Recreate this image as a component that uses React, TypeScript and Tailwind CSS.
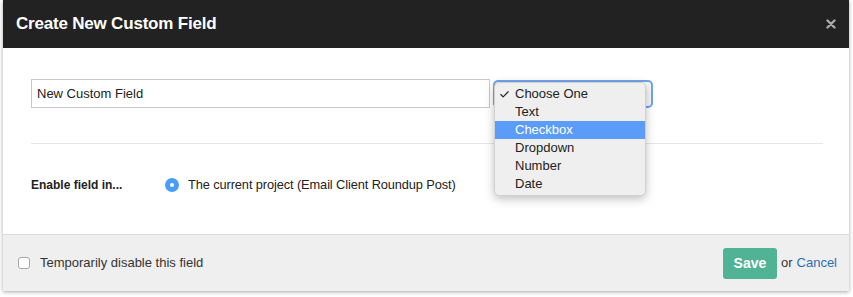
import { Check } from "lucide-react";

const options = ["Choose One", "Text", "Checkbox", "Dropdown", "Number", "Date"];

export default function App() {
  return (
    <div
      className="w-[853px] h-[297px] bg-white pl-[3px] overflow-hidden"
      style={{ fontFamily: '"Liberation Sans", Arial, sans-serif' }}
    >
      <div className="w-[846px] h-[291px] flex flex-col shadow-[0_1px_4px_rgba(0,0,0,0.35)]">
        {/* Header */}
        <div className="h-[48px] bg-[#222222] flex items-center justify-between pl-[13px] pr-[13px]">
          <h1 className="text-white text-[17px] font-bold tracking-[-0.2px]">Create New Custom Field</h1>
          <svg width="10" height="10" viewBox="0 0 10 10">
            <path d="M1.5 1.5 L8.5 8.5 M8.5 1.5 L1.5 8.5" stroke="#a9a9a9" strokeWidth="2.4" strokeLinecap="round" />
          </svg>
        </div>

        {/* Body */}
        <div className="flex-1 bg-white pl-[28px] pr-[26px] pt-[31px]">
          <div className="flex items-center gap-[3px] relative">
            <input
              readOnly
              value="New Custom Field"
              className="w-[459px] h-[29px] border border-[#c8c8c8] px-[5px] text-[13px] text-[#222] outline-none"
            />
            <div className="w-[160px] h-[28px] rounded-[5px] border-2 border-[#6fa4ee] bg-[#f7f7f7] flex items-center justify-end pr-[4px]">
              <svg width="7" height="11" viewBox="0 0 7 11" className="text-[#333]">
                <path d="M0.5 4.5 L3.5 1 L6.5 4.5 Z M0.5 6.5 L3.5 10 L6.5 6.5 Z" fill="currentColor" />
              </svg>
            </div>

            {/* Open dropdown menu */}
            <div className="absolute left-[463px] top-[3px] w-[152px] rounded-[5px] bg-[#efefef] border border-[#d0d0d0] shadow-[0_3px_10px_rgba(0,0,0,0.25)] py-[2px]">
              {options.map((o, i) => (
                <div
                  key={o}
                  className={`h-[18px] flex items-center pl-[20px] relative text-[13px] ${
                    i === 2 ? "bg-[#5a9cf8] text-white" : "text-[#222]"
                  }`}
                >
                  {i === 0 && (
                    <Check className="absolute left-[4px] w-[11px] h-[11px]" strokeWidth={2.5} />
                  )}
                  {o}
                </div>
              ))}
            </div>
          </div>

          <div className="mt-[35px] border-t border-[#e6e6e6]" />

          <div className="flex items-center mt-[31px]">
            <span className="w-[134px] text-[12px] font-bold text-[#222]">Enable field in...</span>
            <span className="w-[14px] h-[14px] rounded-full bg-[#4a9df4] flex items-center justify-center">
              <span className="w-[4px] h-[4px] rounded-full bg-white" />
            </span>
            <span className="ml-[9px] text-[12.8px] tracking-[-0.1px] text-[#222]">
              The current project (Email Client Roundup Post)
            </span>
          </div>
        </div>

        {/* Footer */}
        <div className="h-[57px] bg-[#efefef] border-t border-[#dcdcdc] flex items-center justify-between pl-[15px] pr-[12px]">
          <label className="flex items-center gap-[10px] text-[13px] text-[#333]">
            <span className="w-[12px] h-[12px] rounded-[3px] border border-[#a8a8a8] bg-white" />
            Temporarily disable this field
          </label>
          <div className="flex items-center text-[13px]">
            <button className="w-[54px] h-[31px] rounded-[3px] bg-[#4fb394] text-white text-[14px] font-bold">
              Save
            </button>
            <span className="ml-[4px] text-[#333]">or</span>
            <span className="ml-[4px] text-[#2c6db4]">Cancel</span>
          </div>
        </div>
      </div>
    </div>
  );
}
